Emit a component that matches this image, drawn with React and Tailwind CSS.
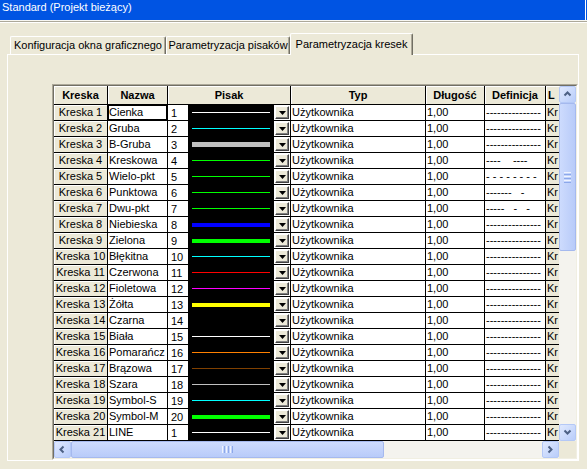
import React from 'react';

const FULL = '---------------';

const rows = [
  ['Cienka', 1, '#ffffff', 1, FULL],
  ['Gruba', 2, '#00ffff', 1, FULL],
  ['B-Gruba', 3, '#c0c0c0', 5, FULL],
  ['Kreskowa', 4, '#00ff00', 1, '----    ----'],
  ['Wielo-pkt', 5, '#00ff00', 1, '- - - - - - - -'],
  ['Punktowa', 6, '#00ff00', 1, '-------   -'],
  ['Dwu-pkt', 7, '#00ff00', 1, '-----   -   -'],
  ['Niebieska', 8, '#0000ff', 4, FULL],
  ['Zielona', 9, '#00ff00', 4, FULL],
  ['Błękitna', 10, '#00ffff', 1, FULL],
  ['Czerwona', 11, '#ff0000', 1, FULL],
  ['Fioletowa', 12, '#ff00ff', 1, FULL],
  ['Żółta', 13, '#ffff00', 4, FULL],
  ['Czarna', 14, '#000000', 1, FULL],
  ['Biała', 15, '#ffffff', 1, FULL],
  ['Pomarańcz', 16, '#ff8000', 1, FULL],
  ['Brązowa', 17, '#804000', 1, FULL],
  ['Szara', 18, '#c0c0c0', 1, FULL],
  ['Symbol-S', 19, '#00ffff', 1, FULL],
  ['Symbol-M', 20, '#00ff00', 4, FULL],
  ['LINE', 1, '#ffffff', 1, FULL],
];

// small arrow for the scrollbar buttons
const Chevron = ({ dir }) => {
  const d = {
    up: 'M1.5 5.5 L4.5 2.5 L7.5 5.5',
    down: 'M1.5 2.5 L4.5 5.5 L7.5 2.5',
    left: 'M5.5 1.5 L2.5 4.5 L5.5 7.5',
    right: 'M2.5 1.5 L5.5 4.5 L2.5 7.5',
  }[dir];
  return (
    <svg width="9" height="9" viewBox="0 0 9 9">
      <path d={d} stroke="#4d6185" strokeWidth="2" fill="none" />
    </svg>
  );
};

const ScrollBtn = ({ dir }) => (
  <div className="w-[17px] h-[17px] shrink-0 rounded-[2px] border border-[#b4c8f6] bg-linear-to-br from-[#e0e9fe] to-[#b9cdfa] flex items-center justify-center">
    <Chevron dir={dir} />
  </div>
);

const DropBtn = () => (
  <div className="w-[14px] h-[13px] bg-[#ece9d8] border border-t-white border-l-white border-r-[#404040] border-b-[#404040] shadow-[inset_-1px_-1px_0_#808080] flex items-center justify-center">
    <svg width="7" height="4" viewBox="0 0 7 4">
      <path d="M0 0 H7 L3.5 4 Z" fill="#000" />
    </svg>
  </div>
);

const HeadCell = ({ className, children }) => (
  <div className={`${className} shrink-0 h-full border-r border-black shadow-[inset_1px_1px_0_#fff] flex items-center`}>
    {children}
  </div>
);

const Row = ({ row, idx }) => {
  const [name, pen, color, thick, def] = row;
  return (
    <div className="flex h-[16px] border-b border-black">
      <div className="w-[54px] shrink-0 border-r border-black bg-[#ece9d8] shadow-[inset_1px_1px_0_#fff] flex items-center justify-center whitespace-nowrap">
        Kreska {idx + 1}
      </div>
      <div className={`w-[60px] shrink-0 border-r border-black bg-white pl-[1px] flex items-center whitespace-nowrap ${idx === 0 ? 'shadow-[inset_0_0_0_1px_#000]' : ''}`}>
        {name}
      </div>
      <div className="w-[123px] shrink-0 border-r border-black bg-white flex">
        <div className="w-[20px] shrink-0 pl-[3px] pt-[1px] flex items-center">{pen}</div>
        <div className="w-[86px] shrink-0 bg-black px-[4px] flex items-center">
          <div className="w-full" style={{ height: thick, background: color }} />
        </div>
        <div className="flex-1 flex items-center justify-center">
          <DropBtn />
        </div>
      </div>
      <div className="w-[135px] shrink-0 border-r border-black bg-white pl-[1px] flex items-center">Użytkownika</div>
      <div className="w-[59px] shrink-0 border-r border-black bg-white pl-[1px] flex items-center">1,00</div>
      <div className="w-[61px] shrink-0 border-r border-black bg-white pl-[1px] flex items-center whitespace-pre overflow-hidden">{def}</div>
      <div className="w-[20px] shrink-0 bg-[#ece9d8] pl-[1px] flex items-center">Kr</div>
    </div>
  );
};

export default function App() {
  return (
    <div className="w-[587px] h-[469px] bg-[#ece9d8] overflow-hidden font-['Liberation_Sans',Arial,sans-serif] text-[11px] text-black">
      {/* title bar */}
      <div className="h-[20px] bg-[#0054e3] flex">
        <div className="pl-[2px] leading-[15px] text-white text-[11px]">Standard (Projekt bieżący)</div>
        <div className="ml-auto mr-[1px] w-px bg-white" />
      </div>
      <div className="h-px bg-[#f7f6f0]" />
      <div className="h-px bg-[#aca899]" />
      <div className="h-px bg-white" />

      {/* tabs */}
      <div className="mt-[10px] h-[21px] pl-[10px] flex items-end">
        <div className="w-[156px] h-[18px] border-t border-l border-white border-r border-r-[#716f64] rounded-t-[2px] shadow-[inset_-1px_0_0_#aca899] flex items-center justify-center whitespace-nowrap">
          Konfiguracja okna graficznego
        </div>
        <div className="w-[124px] h-[18px] border-t border-l border-white border-r border-r-[#716f64] rounded-t-[2px] shadow-[inset_-1px_0_0_#aca899] flex items-center justify-center whitespace-nowrap">
          Parametryzacja pisaków
        </div>
        <div className="relative z-10 -mb-px w-[123px] h-[22px] bg-[#ece9d8] border-t border-l border-white border-r border-r-[#716f64] rounded-t-[2px] shadow-[inset_-1px_0_0_#aca899] flex items-center justify-center pb-[1px] whitespace-nowrap">
          Parametryzacja kresek
        </div>
      </div>

      {/* tab panel */}
      <div className="ml-[7px] w-[572px] h-[407px] border border-t-white border-l-white border-r-white border-b-white pl-[44px] pt-[29px]">
        {/* grid */}
        <div className="w-[526px] h-[376px] border border-t-[#aca899] border-l-[#aca899] border-r-white border-b-white">
          <div className="w-full h-full border border-t-[#716f64] border-l-[#716f64] border-r-[#f1efe2] border-b-[#f1efe2] flex flex-col">
            <div className="flex h-[355px]">
              <div className="w-[505px] shrink-0 overflow-hidden">
                <div className="flex h-[19px] border-b border-black bg-[#ece9d8] font-bold">
                  <HeadCell className="w-[54px] justify-center">Kreska</HeadCell>
                  <HeadCell className="w-[60px] justify-center">Nazwa</HeadCell>
                  <HeadCell className="w-[123px] justify-center">Pisak</HeadCell>
                  <HeadCell className="w-[135px] justify-center">Typ</HeadCell>
                  <HeadCell className="w-[59px] justify-center">Długość</HeadCell>
                  <HeadCell className="w-[61px] justify-center">Definicja</HeadCell>
                  <HeadCell className="w-[20px] pl-[2px]">L</HeadCell>
                </div>
                {rows.map((r, i) => (
                  <Row key={i} row={r} idx={i} />
                ))}
              </div>
              {/* vertical scrollbar */}
              <div className="w-[17px] shrink-0 bg-[#f4f3ee] flex flex-col">
                <ScrollBtn dir="up" />
                <div className="h-[148px] rounded-[2px] border border-[#a5b9ee] bg-linear-to-r from-[#cddbfd] to-[#b8cbf9] flex flex-col items-center justify-center gap-px">
                  <div className="w-[7px] h-px bg-[#eef3fe]" />
                  <div className="w-[7px] h-px bg-[#8ca8ea]" />
                  <div className="w-[7px] h-px bg-[#eef3fe]" />
                  <div className="w-[7px] h-px bg-[#8ca8ea]" />
                  <div className="w-[7px] h-px bg-[#eef3fe]" />
                  <div className="w-[7px] h-px bg-[#8ca8ea]" />
                </div>
                <div className="flex-1" />
                <ScrollBtn dir="down" />
              </div>
            </div>
            {/* horizontal scrollbar */}
            <div className="flex h-[17px]">
              <div className="w-[505px] shrink-0 bg-[#f4f3ee] flex">
                <ScrollBtn dir="left" />
                <div className="w-[313px] shrink-0 rounded-[2px] border border-[#a5b9ee] bg-linear-to-b from-[#cddbfd] to-[#b8cbf9] flex items-center justify-center gap-px">
                  <div className="w-px h-[7px] bg-[#eef3fe]" />
                  <div className="w-px h-[7px] bg-[#8ca8ea]" />
                  <div className="w-px h-[7px] bg-[#eef3fe]" />
                  <div className="w-px h-[7px] bg-[#8ca8ea]" />
                  <div className="w-px h-[7px] bg-[#eef3fe]" />
                  <div className="w-px h-[7px] bg-[#8ca8ea]" />
                </div>
                <div className="flex-1" />
                <ScrollBtn dir="right" />
              </div>
              <div className="flex-1 bg-[#ece9d8]" />
            </div>
          </div>
        </div>
      </div>
    </div>
  );
}
